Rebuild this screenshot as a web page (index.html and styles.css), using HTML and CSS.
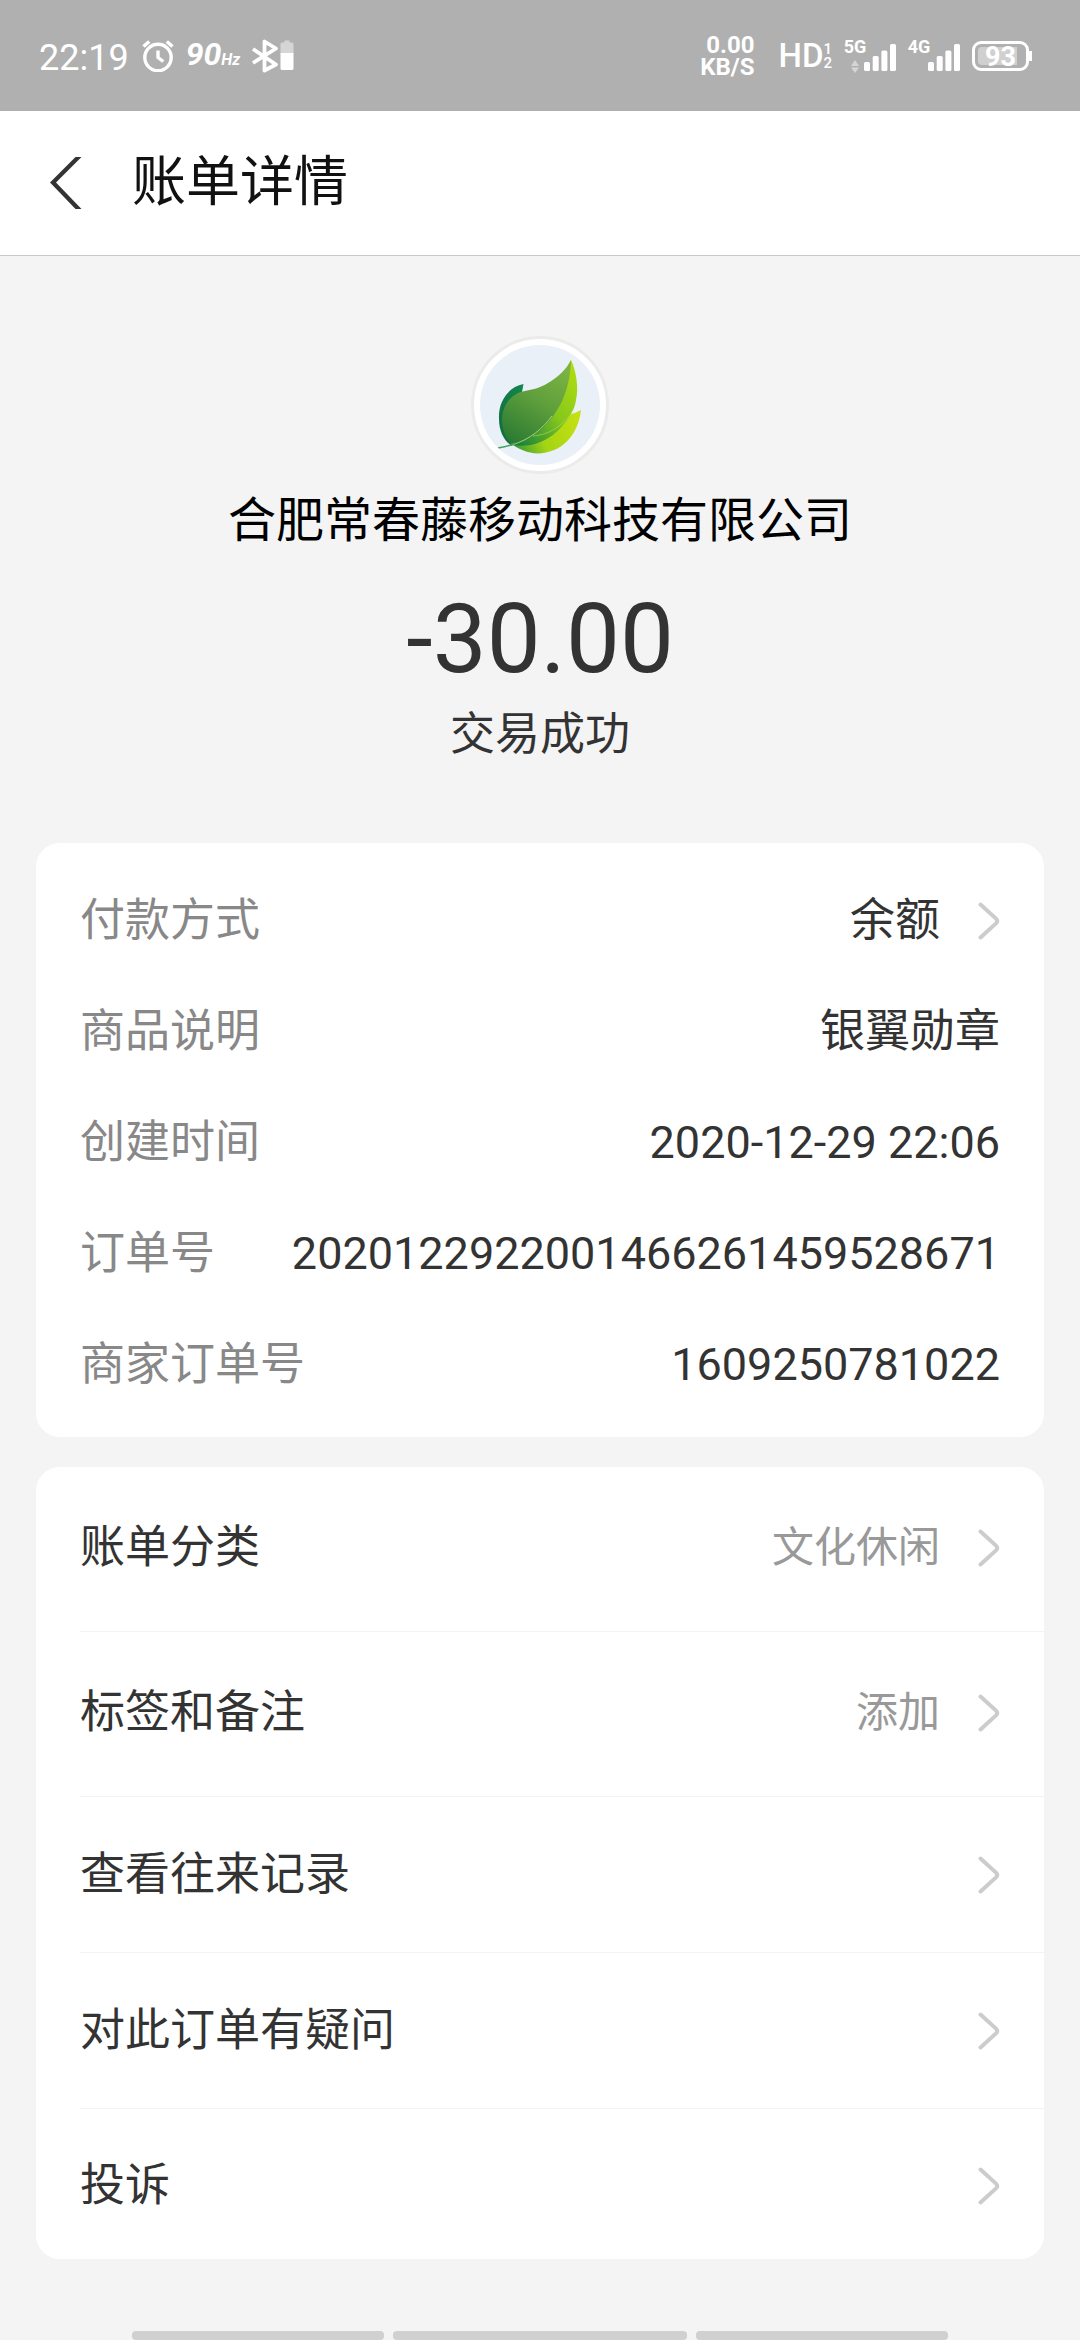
FILE: index.html
```html
<!DOCTYPE html>
<html lang="zh-CN">
<head>
<meta charset="utf-8">
<meta name="viewport" content="width=device-width, initial-scale=1">
<title>账单详情</title>
<link rel="stylesheet" href="styles.css">
</head>
<body>
<svg class="defs" aria-hidden="true">
  <symbol id="chevron" viewBox="0 0 22 38">
    <path d="M2.5 2.5 L18 16.6 Q20.4 19 18 21.4 L2.5 35.5" fill="none" stroke="#ccc" stroke-width="4" stroke-linecap="round"/>
  </symbol>
  <symbol id="bars" viewBox="0 0 32 28">
    <rect x="0" y="18" width="6" height="9" rx="1.5"/>
    <rect x="8.7" y="12" width="6" height="15" rx="1.5"/>
    <rect x="17.4" y="6.5" width="6" height="20.5" rx="1.5"/>
    <rect x="26" y="0" width="6" height="27" rx="1.5"/>
  </symbol>
</svg>

<div class="status-bar">
  <div class="status-left">
    <span class="clock">22:19</span>
    <svg class="alarm" viewBox="0 0 32 32" fill="none" stroke="#fff" aria-hidden="true">
      <circle cx="16" cy="17.5" r="13.2" stroke-width="3.4"/>
      <path d="M16 10.5 V17.5 L21.3 21.5" stroke-width="3.4"/>
      <path d="M1.5 6.5 L7.2 1.5 M30.5 6.5 L24.8 1.5" stroke-width="3.6"/>
    </svg>
    <span class="refresh">90<small>Hz</small></span>
    <svg class="bluetooth" viewBox="0 0 44 34" aria-hidden="true">
      <path d="M2 10 L25 25.5 L13.5 31.5 V2.5 L25 9.5 L2 24" fill="none" stroke="#fff" stroke-width="3.8" stroke-linejoin="round"/>
      <path d="M29.5 5 a1.5 1.5 0 0 1 1.5-1.5 h2.500 V1.500 h5 V3.500 h2.500 a1.500 1.500 0 0 1 1.500 1.500 V15 H29.500 V5 Z" fill="#d5d5d5"/>
      <path d="M29.5 14 H42.5 V29.5 a1.5 1.5 0 0 1-1.5 1.5 H31 a1.5 1.5 0 0 1-1.5-1.5 Z" fill="#fff"/>
    </svg>
  </div>
  <div class="status-right">
    <span class="speed"><span>0.00</span><span>KB/S</span></span>
    <span class="hd">HD<span class="hd-sims"><span>1</span><span>2</span></span></span>
    <span class="sim">
      <span class="sim-label">5G<svg class="traffic" viewBox="0 0 8 13" aria-hidden="true"><path d="M4 0 L8 6 H0 Z M0 7.5 H8 L4 13 Z" fill="#d5d5d5"/></svg></span>
      <svg class="sim-bars" fill="#fff" aria-hidden="true"><use href="#bars"/></svg>
    </span>
    <span class="sim">
      <span class="sim-label">4G</span>
      <svg class="sim-bars" fill="#fff" aria-hidden="true"><use href="#bars"/></svg>
    </span>
    <span class="battery"><span class="battery-level">93</span></span>
  </div>
</div>

<header class="header">
  <button class="back" type="button" aria-label="返回">
    <svg viewBox="0 0 32 52" aria-hidden="true"><path d="M25.5 0 H31.5 L6 25.5 L31.5 52 H25.5 L0 25.5 Z" fill="#333"/></svg>
  </button>
  <h1 class="title">账单详情</h1>
</header>

<main class="main">
  <section class="summary">
    <div class="avatar">
      <svg viewBox="0 0 120 120" aria-hidden="true">
        <defs>
          <linearGradient id="body" x1="0.7" y1="0" x2="0.2" y2="1">
            <stop offset="0" stop-color="#7cb342"/><stop offset="0.45" stop-color="#5f9f3c"/><stop offset="1" stop-color="#2b7a33"/>
          </linearGradient>
          <linearGradient id="side" x1="0.9" y1="0" x2="0.1" y2="1">
            <stop offset="0" stop-color="#b2dd12"/><stop offset="0.5" stop-color="#86c81c"/><stop offset="1" stop-color="#17803c"/>
          </linearGradient>
          <linearGradient id="lower" x1="1" y1="0.4" x2="0" y2="0.7">
            <stop offset="0" stop-color="#c3e011"/><stop offset="0.6" stop-color="#a4d414"/><stop offset="1" stop-color="#3f9d33"/>
          </linearGradient>
          <linearGradient id="back-leaf" x1="1" y1="0" x2="0" y2="1">
            <stop offset="0" stop-color="#128a50"/><stop offset="1" stop-color="#136b3e"/>
          </linearGradient>
        </defs>
        <rect width="120" height="120" fill="#eaf0f8"/>
        <path d="M43.5 39 C28 42 18 57 19 74 C19 86 24 96 32 101 L48 58 L42 47 Z" fill="url(#back-leaf)"/>
        <path d="M101 65 C98 92 80 108 58 108.5 C47 108 39 104 33 100 C58 98 70 93 91 69 Q96 68 101 65 Z" fill="url(#lower)"/>
        <path d="M91 15 C96 25 99 43 96 55 C95 62 93 65 91 69 C78 91 58 104 32 100 L62 70 Z" fill="url(#side)"/>
        <path d="M91 15 C90 48 78 68 62 84 C54 91 44 96 32 100 C19 86 19 64 31 53 C41 43 52 48 68 38 C78 32 86 25 91 15 Z" fill="url(#body)"/>
        <path d="M91 69 C81 82 68 90 53 91" fill="none" stroke="#b5db66" stroke-width="0.6"/>
        <path d="M72 71 C63 83 51 94 32 100" fill="none" stroke="#a9d27e" stroke-width="1"/>
        <path d="M18 103 C25 102 30 101 35 98" fill="none" stroke="#43a05c" stroke-width="1.5"/>
      </svg>
    </div>
    <h2 class="merchant">合肥常春藤移动科技有限公司</h2>
    <p class="amount">-30.00</p>
    <p class="state">交易成功</p>
  </section>

  <dl class="card details">
    <div class="detail"><dt>付款方式</dt><dd><a class="more" href="#">余额<svg class="chevron" aria-hidden="true"><use href="#chevron"/></svg></a></dd></div>
    <div class="detail"><dt>商品说明</dt><dd>银翼勋章</dd></div>
    <div class="detail"><dt>创建时间</dt><dd>2020-12-29 22:06</dd></div>
    <div class="detail"><dt>订单号</dt><dd>2020122922001466261459528671</dd></div>
    <div class="detail"><dt>商家订单号</dt><dd>1609250781022</dd></div>
  </dl>

  <nav class="card actions">
    <a class="action tall" href="#">账单分类<span class="more hint">文化休闲<svg class="chevron" aria-hidden="true"><use href="#chevron"/></svg></span></a>
    <a class="action tall" href="#">标签和备注<span class="more hint">添加<svg class="chevron" aria-hidden="true"><use href="#chevron"/></svg></span></a>
    <a class="action" href="#">查看往来记录<svg class="chevron" aria-hidden="true"><use href="#chevron"/></svg></a>
    <a class="action" href="#">对此订单有疑问<svg class="chevron" aria-hidden="true"><use href="#chevron"/></svg></a>
    <a class="action" href="#">投诉<svg class="chevron" aria-hidden="true"><use href="#chevron"/></svg></a>
  </nav>
</main>

<div class="gesture-bar"><span></span><span></span><span></span></div>
</body>
</html>
```
FILE: styles.css
```css
* {
  box-sizing: border-box;
}

body {
  display: flex;
  flex-direction: column;
  min-height: 100vh;
  margin: 0;
  background: #f4f4f4;
  color: #333;
  font-family: Roboto, "Noto Sans CJK SC", sans-serif;
  font-size: 45px;
  line-height: 54px;
}

h1, h2, p, dl, dd {
  margin: 0;
  font-weight: 400;
}

a {
  color: inherit;
  text-decoration: none;
}

svg {
  display: block;
  flex: none;
}

.defs {
  position: absolute;
  width: 0;
  height: 0;
}

/* Status bar */
.status-bar {
  display: flex;
  justify-content: space-between;
  align-items: center;
  height: 111px;
  padding: 0 51px 0 39px;
  background: #b0b0b0;
  color: #fff;
}

.status-left,
.status-right {
  display: flex;
  align-items: center;
}

.clock {
  padding-top: 4px;
  font-size: 36px;
  line-height: 40px;
}

.alarm {
  width: 32px;
  height: 32px;
  margin-left: 13px;
}

.refresh {
  margin-left: 12px;
  padding-top: 2px;
  font-size: 32px;
  line-height: 36px;
  font-style: italic;
  font-weight: 700;
}

.refresh small {
  font-size: 16px;
}

.bluetooth {
  width: 44px;
  height: 34px;
  margin-left: 11px;
}

.speed {
  display: flex;
  flex-direction: column;
  align-items: flex-end;
  margin-right: 24px;
  font-size: 24px;
  line-height: 22px;
  font-weight: 700;
}

.hd {
  display: flex;
  align-items: center;
  margin-right: 12px;
  font-size: 33px;
  line-height: 40px;
  font-weight: 500;
}

.hd-sims {
  display: flex;
  flex-direction: column;
  font-size: 15px;
  line-height: 14px;
}

.sim {
  display: flex;
  align-items: flex-end;
  height: 32px;
  margin-right: 12px;
}

.sim-label {
  display: flex;
  flex-direction: column;
  align-items: center;
  align-self: flex-start;
  width: 22px;
  font-size: 18px;
  line-height: 14px;
  font-weight: 700;
}

.traffic {
  width: 8px;
  height: 13px;
  margin-top: 6px;
}

.sim-bars {
  width: 32px;
  height: 28px;
  margin-left: -2px;
}

.battery {
  display: flex;
  position: relative;
  width: 57px;
  height: 30px;
  padding: 3px;
  border: 3px solid #fff;
  border-radius: 9px;
}

.battery::after {
  content: "";
  position: absolute;
  top: 7px;
  right: -6px;
  width: 3px;
  height: 10px;
  background: #fff;
}

.battery-level {
  flex: 1;
  border-radius: 4px;
  background: linear-gradient(90deg, #d0d0d0 86%, transparent 86%);
  font-size: 27px;
  line-height: 20px;
  font-weight: 700;
  text-align: center;
}

/* Title bar */
.header {
  display: flex;
  align-items: center;
  gap: 50px;
  height: 145px;
  padding: 0 50px;
  background: #fff;
  border-bottom: 1px solid #c8c8c8;
}

.back {
  padding: 0;
  border: 0;
  background: none;
}

.back svg {
  width: 32px;
  height: 52px;
}

.title {
  color: #111;
  font-size: 54px;
  line-height: 60px;
}

/* Payment summary */
.main {
  flex: 1;
  padding: 80px 36px 40px;
}

.summary {
  display: flex;
  flex-direction: column;
  align-items: center;
  text-align: center;
}

.avatar {
  width: 138px;
  height: 138px;
  padding: 6px;
  border: 3px solid #ebebeb;
  border-radius: 50%;
  background: #fff;
}

.avatar svg {
  width: 120px;
  height: 120px;
  border-radius: 50%;
}

.merchant {
  margin-top: 17px;
  color: #000;
  font-size: 48px;
  line-height: 60px;
}

.amount {
  margin-top: 40px;
  font-size: 96px;
  line-height: 96px;
}

.state {
  margin-top: 21px;
}

/* Cards */
.card {
  border-radius: 24px;
  background: #fff;
}

.details {
  margin-top: 81px;
  padding: 22px 44px 17px;
}

.detail {
  display: flex;
  justify-content: space-between;
  align-items: center;
  height: 111px;
}

.detail dt {
  color: #888;
}

.more {
  display: flex;
  align-items: center;
  gap: 38px;
}

.hint {
  color: #999;
  font-size: 42px;
}

.chevron {
  width: 22px;
  height: 38px;
}

.actions {
  margin-top: 30px;
  padding-left: 44px;
}

.action {
  display: flex;
  justify-content: space-between;
  align-items: center;
  height: 156px;
  padding-right: 44px;
  border-bottom: 1px solid #f3f3f3;
}

.tall {
  height: 165px;
  padding-bottom: 3px;
}

.action:last-child {
  height: 150px;
  padding-top: 3px;
  border-bottom: 0;
}

/* System gesture hints */
.gesture-bar {
  display: grid;
  grid-template-columns: 6fr 7fr 6fr;
  gap: 9px;
  padding: 0 132px;
}

.gesture-bar span {
  height: 9px;
  border-radius: 4px;
  background: #d0d0d0;
}
```
